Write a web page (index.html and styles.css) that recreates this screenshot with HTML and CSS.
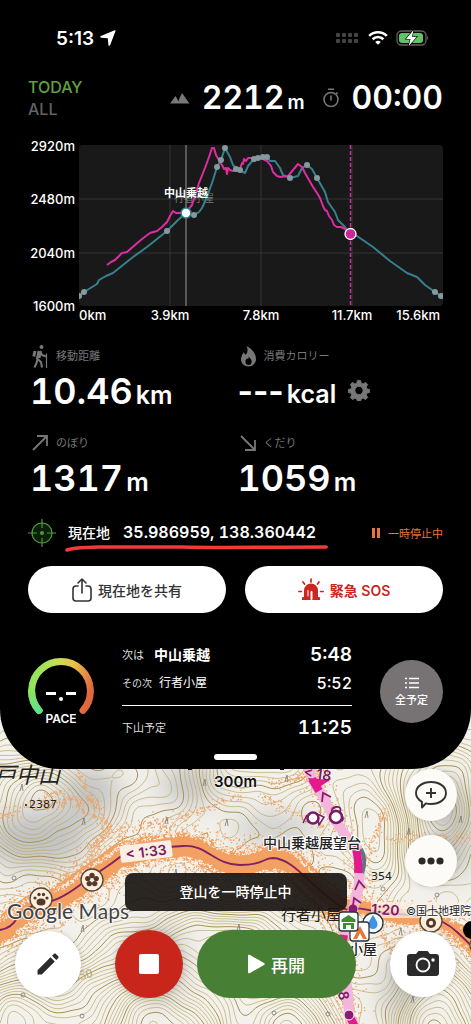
FILE: index.html
```html
<!DOCTYPE html>
<html lang="ja">
<head>
  <meta charset="UTF-8">
  <meta name="viewport" content="width=device-width, initial-scale=1">
  <title>登山記録</title>
  <link rel="stylesheet" href="styles.css">
</head>
<body>
  <main class="panel">
    <div class="status-bar">
      <div class="status-time">
        <span>5:13</span>
        <svg width="16" height="16" viewBox="0 0 16 16"><path d="M15.500 1 10.200 15c-.4 1-1.700 1-1.800-.1L7.800 8.200 1.100 7.700C0 7.600 0 6.300.9 5.900L14.700.2c.6-.2 1 .2.8.8z" fill="#fff"/></svg>
      </div>
      <div class="status-icons">
        <svg width="24" height="12" viewBox="0 0 24 12" fill="#434343">
          <rect x="0" y="1" width="4" height="4" rx="1"/><rect x="6" y="1" width="4" height="4" rx="1"/><rect x="12" y="1" width="4" height="4" rx="1"/><rect x="18" y="1" width="4" height="4" rx="1"/>
          <rect x="0" y="7" width="4" height="4" rx="1"/><rect x="6" y="7" width="4" height="4" rx="1"/><rect x="12" y="7" width="4" height="4" rx="1"/><rect x="18" y="7" width="4" height="4" rx="1"/>
        </svg>
        <svg width="20" height="16" viewBox="0 0 20 16" fill="none" stroke="#fff" stroke-width="2.600">
          <path d="M1.200 5.800a12.500 12.500 0 0 1 17.600 0"/><path d="M4.600 9.200a7.700 7.700 0 0 1 10.800 0"/>
          <path d="M10 14.800 7.200 12a4 4 0 0 1 5.600 0z" fill="#fff" stroke="none"/>
        </svg>
        <svg width="33" height="18" viewBox="0 0 33 18">
          <rect x="1" y="2" width="29" height="14" rx="4.500" fill="none" stroke="#69605f" stroke-width="1.300"/>
          <rect x="3" y="4" width="24" height="10" rx="3" fill="#5fc466"/>
          <path d="M31.200 7v4c1.400-.5 1.400-3.500 0-4z" fill="#69605f"/>
          <path d="M17.500 1 10 10h4.500L12.700 17l8-9.300h-4.700z" fill="#fff" stroke="#000" stroke-width="1.200" paint-order="stroke"/>
        </svg>
      </div>
    </div>

    <header class="summary">
      <div class="range">
        <a href="#today" class="range-link active">TODAY</a>
        <a href="#all" class="range-link">ALL</a>
      </div>
      <div class="summary-values">
        <svg width="20" height="12" viewBox="0 0 20 12" fill="#777"><path d="M0 11.500 5.500 4l3 4.200L12 1l7.500 10.500z"/><path d="m9 9-2-3" stroke="#000" stroke-width=".8"/></svg>
        <p class="big">2212<small>m</small></p>
        <svg class="timer" width="18" height="20" viewBox="0 0 18 20" fill="none" stroke="#777" stroke-width="1.600"><circle cx="9" cy="11.500" r="7"/><path d="M6 1.300h6M9 7.500v5M14 6l1.500-1.500"/></svg>
        <p class="big">00:00</p>
      </div>
    </header>

    <svg class="chart" viewBox="0 0 415 186" role="img" aria-label="標高グラフ">
      <g class="axis" text-anchor="end">
        <text x="47" y="12">2920m</text>
        <text x="47" y="65">2480m</text>
        <text x="47" y="119">2040m</text>
        <text x="47" y="172">1600m</text>
      </g>
      <g class="axis" text-anchor="middle">
        <text x="51" y="181" text-anchor="start">0km</text>
        <text x="142" y="181">3.9km</text>
        <text x="233" y="181">7.8km</text>
        <text x="324" y="181">11.7km</text>
        <text x="412" y="181" text-anchor="end">15.6km</text>
      </g>
      <clipPath id="plot"><rect width="364" height="161" rx="4"/></clipPath>
      <g transform="translate(51 6)">
        <g clip-path="url(#plot)">
          <rect width="364" height="161" fill="#191919"/>
          <path d="M0 54H364M0 108H364M91 0V161M182 0V161M273 0V161" stroke="#353535"/>
          <text class="ghost-label" x="115" y="57" text-anchor="middle">行者小屋</text>
          <path class="line plan" d="M0 151 5 147 18 139 20 135 27 131 34 128 44 120 54 112 68 102 78 94 88 86 99 75 107 68 115 70 120 67 123 63 128 52 134 35 138 22 142 15 146 3 151 12 154 20 158 24 162 26 166 28 169 21 175 14 188 12 191 16 196 16 201 23 204 30 211 33 219 31 223 23 228 20 233 24 238 33 246 47 249 57 256 67 259 75 266 82 271 89 278 91 294 102 311 116 328 128 338 132 346 140 356 147 362 151"/>
          <path class="line track" d="M28 120 32 117 36 115 43 108 48 107 56 100 63 94 71 88 78 86 83 82 88 77 91 71 94 66 97 68 103 68 107 67 113 60 120 38 126 23 130 12 133 3 135 3 137 10 141 17 143 20 145 24 147 23 148 29 149 23 151 25 154 26 158 25 161 24 163 18 164 19 165 14 167 16 169 13 178 13 184 14 188 16 192 21 194 27 198 31 201 32 209 31 214 25 219 19 223 22 226 28 230 35 234 42 238 48 241 53 244 61 246 65 248 66 250 71 253 75 255 80 258 82 262 82 266 84 271 89"/>
          <g class="spots">
            <circle cx="0" cy="151" r="3"/><circle cx="5" cy="147" r="3"/><circle cx="88" cy="86" r="3"/><circle cx="115" cy="70" r="3"/><circle cx="138" cy="22" r="3"/><circle cx="142" cy="15" r="3"/><circle cx="146" cy="3" r="3"/><circle cx="157" cy="24" r="3"/><circle cx="161" cy="25" r="3"/><circle cx="175" cy="14" r="3"/><circle cx="179" cy="13" r="3"/><circle cx="184" cy="12" r="3"/><circle cx="188" cy="12" r="3"/><circle cx="211" cy="33" r="3"/><circle cx="228" cy="20" r="3"/><circle cx="238" cy="33" r="3"/><circle cx="356" cy="147" r="3"/><circle cx="362" cy="151" r="3"/>
          </g>
          <path d="M107 0V161" stroke="#999"/>
          <path d="M271.500 0V161" stroke="#c5319a" stroke-width="1.500" stroke-dasharray="4 2"/>
        </g>
        <circle cx="107" cy="68" r="5" fill="#fff" stroke="#2c7f92" stroke-width="1.500"/>
        <circle cx="271.500" cy="89" r="5.500" fill="#cf2597" stroke="#fff" stroke-width="1.300"/>
        <text class="spot-label" x="107" y="52" text-anchor="middle">中山乗越</text>
      </g>
    </svg>

    <section class="stats">
      <div class="stat">
        <h2><svg width="24" height="24" viewBox="0 0 24 24" fill="none" stroke="#777" stroke-width="2" stroke-linejoin="round"><circle cx="13.500" cy="3" r="2" fill="#777" stroke="none"/><path d="M7 7 5.800 12.500" stroke-width="3"/><path d="m10.500 7.500-1.500 7 4 3.500 1 5.500M9.500 15l-1 4-2 4.500M12 7l2 4 4 1.500" /><path d="m11.800 7-1.300 7" stroke-width="4"/><path d="M18.500 9.500V24" stroke-width="1.200"/></svg>移動距離</h2>
        <p class="value">10.46<small>km</small></p>
      </div>
      <div class="stat">
        <h2><svg width="24" height="24" viewBox="0 0 24 24"><path d="M10.500 2c4.500 2 9.500 7 9.500 13 0 4.500-3.500 7.500-7.500 7.500S5 19.500 5 15.500C5 12 7 9.500 8 8c.3 1.500.8 2.300 1.700 2.800C12 9 12 5 10.500 2z" fill="#777"/><path d="M12.700 12.500c1.200 1.800 3 3 3 5.200 0 2-1.400 3.300-3.200 3.300s-3.100-1.300-3.100-3.100c0-1.700 1-2.700 1.700-3.600l.9 1c.6-.8.8-1.800.7-2.800z" fill="#000"/></svg>消費カロリー</h2>
        <p class="value"><span class="dashes">---</span><small>kcal</small>
          <button class="icon-button" aria-label="設定"><svg width="22" height="22" viewBox="0 0 24 24"><path fill="#777" fill-rule="evenodd" stroke="#777" stroke-linejoin="round" d="M10.300 1.500h3.400l.7 3 2.100.9 2.600-1.700 2.400 2.400-1.700 2.600.9 2.100 3 .7v3.200l-3 .7-.9 2.100 1.700 2.600-2.400 2.400-2.600-1.700-2.100.9-.7 2.800h-3.400l-.7-2.800-2.100-.9-2.600 1.700-2.400-2.400 1.700-2.600-.9-2.100-3-.7v-3.200l3-.7.9-2.100-1.700-2.600 2.400-2.400 2.600 1.700 2.100-.9zM12 8a4.500 4.500 0 1 0 0 9 4.500 4.500 0 0 0 0-9z"/></svg></button>
        </p>
      </div>
      <div class="stat">
        <h2><svg width="24" height="24" viewBox="0 0 24 24" fill="none" stroke="#777" stroke-width="1.800"><path d="M5 19 19 5M9 5h10v10"/></svg>のぼり</h2>
        <p class="value">1317<small>m</small></p>
      </div>
      <div class="stat">
        <h2><svg width="24" height="24" viewBox="0 0 24 24" fill="none" stroke="#777" stroke-width="1.800"><path d="m5 5 14 14M19 9v10H9"/></svg>くだり</h2>
        <p class="value">1059<small>m</small></p>
      </div>
    </section>

    <section class="location">
      <svg width="28" height="28" viewBox="0 0 28 28" fill="none" stroke="#4d9a3a" stroke-width="1.200"><circle cx="14" cy="14" r="10" fill="#0b1f08"/><path d="M14 0v9M14 19v9M0 14h9M19 14h9"/><circle cx="14" cy="14" r="2" fill="#4d9a3a" stroke="none"/></svg>
      <p class="coords">現在地<span>35.986959, 138.360442</span>
        <svg class="underline" viewBox="0 0 268 8" preserveAspectRatio="none"><path d="M2 6C12 3 20 4 34 3L120 3 C150 4 200 3 266 3" fill="none" stroke="#f23a3a" stroke-width="3.500" stroke-linecap="round"/></svg>
      </p>
      <p class="paused"><svg width="8" height="10" viewBox="0 0 8 10" fill="#e8763a"><path d="M0 0h3v10H0zM5 0h3v10H5z"/></svg>一時停止中</p>
    </section>

    <div class="actions">
      <button class="pill">
        <svg width="20" height="24" viewBox="0 0 20 24" fill="none" stroke="#333" stroke-width="1.600" stroke-linecap="round" stroke-linejoin="round"><path d="M6 8H4a3 3 0 0 0-3 3v9a3 3 0 0 0 3 3h12a3 3 0 0 0 3-3v-9a3 3 0 0 0-3-3h-2M10 15V1M6 5l4-4 4 4"/></svg>
        現在地を共有
      </button>
      <button class="pill sos">
        <svg width="26" height="24" viewBox="0 0 26 24" fill="none" stroke="#cb2720" stroke-width="1.700" stroke-linecap="round"><path d="M6 19v-6.500a7 7 0 0 1 14 0V19h1a1 1 0 0 1 1 1v2H4v-2a1 1 0 0 1 1-1z" fill="#cb2720" stroke="none"/><path d="M13.500 21v-7" stroke="#fff" stroke-width="2"/><path d="M10 12.500V18" stroke="#fff" stroke-width="1"/><path d="M13 1v3M5 4l1.500 2M21 4l-1.500 2M.9 13.500h2.500M22.600 13.500h2.500"/></svg>
        緊急 SOS
      </button>
    </div>

    <section class="plan-row">
      <svg width="66" height="68" viewBox="0 0 66 68" role="img" aria-label="ペース">
        <linearGradient id="pace" x1="0" y1=".3" x2="1" y2=".6"><stop offset="0" stop-color="#8ee35e"/><stop offset=".3" stop-color="#c4e055"/><stop offset=".6" stop-color="#e8c04c"/><stop offset="1" stop-color="#e0683f"/></linearGradient>
        <linearGradient id="pace-start" x1="0" y1="0" x2="0" y2="1"><stop offset="0" stop-color="#8ee35e"/><stop offset="1" stop-color="#5fe08c"/></linearGradient>
        <path d="M11 52.500A29.400 29.400 0 1 1 55 52.500" fill="none" stroke="url(#pace)" stroke-width="7" stroke-linecap="round"/>
        <path d="M3.600 33A29.400 29.400 0 0 0 11 52.500" fill="none" stroke="url(#pace-start)" stroke-width="7" stroke-linecap="round"/>
        <path d="M18 35.500h10M38 35.500h10" stroke="#fff" stroke-width="3"/><circle cx="33" cy="41" r="2" fill="#fff"/>
        <text class="pace-label" x="33" y="65" text-anchor="middle">PACE</text>
      </svg>
      <dl class="schedule">
        <div class="next"><dt>次は</dt><dd class="place">中山乗越</dd><dd class="time">5:48</dd></div>
        <div class="after"><dt>その次</dt><dd class="place">行者小屋</dd><dd class="time">5:52</dd></div>
        <div class="finish"><dt>下山予定</dt><dd class="time">11:25</dd></div>
      </dl>
      <button class="all-plans">
        <svg width="14" height="12" viewBox="0 0 14 12" fill="none" stroke="#fff" stroke-width="1.300"><path d="M4 1.500h10M4 6h10M4 10.500h10M0 1.500h2M0 6h2M0 10.500h2"/></svg>
        全予定
      </button>
    </section>
    <button class="handle" aria-label="パネルを開閉"></button>
  </main>

  <section class="map">
    <svg class="map-canvas" viewBox="0 0 471 325" preserveAspectRatio="xMidYMin slice" role="img" aria-label="地図">
      <defs>
        <filter id="soft" x="-50%" y="-50%" width="200%" height="200%"><feGaussianBlur stdDeviation="14"/></filter>
      </defs>
      <rect width="471" height="325" fill="#f3f1eb"/>
      <g fill="#9fa3a8" filter="url(#soft)" opacity=".6">
        <ellipse cx="35" cy="140" rx="55" ry="30"/>
        <ellipse cx="90" cy="95" rx="30" ry="28"/>
        <ellipse cx="160" cy="265" rx="22" ry="40"/>
        <ellipse cx="275" cy="130" rx="45" ry="12"/>
        <ellipse cx="455" cy="130" rx="20" ry="50"/>
        <ellipse cx="400" cy="290" rx="16" ry="35"/>
        <ellipse cx="190" cy="85" rx="30" ry="20"/>
      </g>
      <path id="contours" class="contours"/>
      <path id="contoursBold" class="contours bold"/>
      <path class="ridge" id="routeWest" d="M-8 236 0 231 7 229 17 219 40 205 60 201 80 186 100 173 120 158 145 151 172 148 183 147 200 151 217 161 233 166 247 165 263 160 273 159 290 164 310 184 330 201 343 209 353 210"/>
      <path class="ridge thin" id="routeEast" d="M353 210 363 208 377 213 400 218 430 218 443 225 457 233 471 246 480 256"/>
      <path id="stipple" fill="#f0a264"/>
      <path id="stippleLight" fill="#fbf5ec"/>
      <path class="route" d="M-8 236 0 231Q12 229 17 219T40 205C52 202 60 201 80 186S105 170 120 158S160 149 183 147S215 166 240 166S262 159 273 159C295 160 310 188 343 209Q348 212 353 210T377 213L430 218Q445 222 457 233T480 256"/>
      <path class="trail" d="M306 55 312 80 322 96 335 121 346 137 357 150 360 172 358 191 353 210 343 238 342 262 347 288 349 316 356 330"/>
      <path d="M361 150Q367 161 362 174" stroke="#5d7584" stroke-width="4" fill="none"/>
      <path d="M312 80 319 92M355 147Q359 158 358 174M344 236 343 243M349 316 356 330" stroke="#e21a8c" stroke-width="8" fill="none"/>
      <path d="m308 79 22 2-9 6-9-1z" fill="#e21a8c"/>
      <g fill="none" stroke="#8b1a70" stroke-width="1.800"><path d="m322 103 1-9 8 4M355 191l4-9 6 7M353 207l1-8 7 5"/></g>
      <g class="walk-time">
        <text x="303" y="78" transform="rotate(8 303 78)">&lt; 18</text>
        <text x="330" y="108" transform="rotate(75 330 108)">06</text>
        <text x="344" y="298" transform="rotate(80 344 292)">8</text>
        <g transform="rotate(-7 146 152)">
          <rect x="120" y="144" width="52" height="17" rx="2" fill="#f9efe4"/>
          <text x="146" y="158" text-anchor="middle">&lt; 1:33</text>
        </g>
        <rect x="371" y="203" width="100" height="16" fill="#f9efe4" opacity=".75"/>
        <text x="371" y="215" transform="rotate(3 371 215)">1:20</text>
      </g>
      <g fill="#fff" stroke="#7b1a63" stroke-width="2.600">
        <path d="m317 115 7 3-5 8zM307 116l-4 8" stroke-width="1.500"/><circle cx="313" cy="119" r="5.500"/><circle cx="336" cy="118" r="6"/>
      </g>
      <circle cx="353" cy="210" r="4.500" fill="#8b1a70"/>
      <circle cx="349" cy="316" r="5" fill="#8b1a70" stroke="#fff"/>
      <g fill="#fbefd9" stroke="#55453a" stroke-width="1.300">
        <circle cx="92" cy="181" r="11"/><circle cx="41" cy="200" r="11"/><circle cx="431" cy="222" r="11"/><circle cx="480" cy="246" r="10"/>
      </g>
      <g fill="#55382b">
        <circle cx="92" cy="176.500" r="2.700"/><circle cx="96.200" cy="179.600" r="2.700"/><circle cx="94.700" cy="184.600" r="2.700"/><circle cx="89.300" cy="184.600" r="2.700"/><circle cx="87.800" cy="179.600" r="2.700"/>
        <ellipse cx="41" cy="203" rx="4.500" ry="3.500"/><circle cx="35" cy="199" r="1.600"/><circle cx="39" cy="195.500" r="1.700"/><circle cx="43.500" cy="195.500" r="1.700"/><circle cx="47" cy="199" r="1.600"/>
        <circle cx="431" cy="224" r="5"/>
      </g>
      <circle cx="92" cy="181" r="1.600" fill="#fbefd9"/>
      <circle cx="431" cy="224" r="2.200" fill="#fbefd9"/>
      <circle cx="472" cy="231" r="9" fill="#000"/>
      <g class="marks" fill="none" stroke="#777" stroke-width=".8">
        <path d="m20 92 2-7 1 7M82 126l2-7 1 7M165 125l2-7 1 7M225 127l2-7 1 7M174 177l2-7 1 7M81 233l2-7 1 7M203 87l2-7 1 7M365 119l2-7 1 7M407 136l2-7 1 7M459 124l2-7 1 7M399 236l2-7 1 7M411 304l2-7 1 7M285 83l2-7 1 7M237 232l2-7 1 7"/>
        <circle cx="14" cy="179" r="2"/><circle cx="23" cy="296" r="2"/><circle cx="82" cy="317" r="2"/><circle cx="274" cy="314" r="2"/><circle cx="383" cy="190" r="2"/><circle cx="437" cy="196" r="2"/><circle cx="328" cy="315" r="2"/>
      </g>
      <g class="place-name">
        <text class="slanted" x="-6" y="84">戸中山</text>
        <text class="height" x="29" y="109">2387</text><circle cx="26" cy="106" r="1"/>
        <text class="height" x="371" y="181">354</text>
        <text class="elevation" x="74" y="282" transform="rotate(-12 74 282)">350</text>
        <text class="village" x="281" y="221">行者小屋</text>
        <text class="halo" x="263" y="149">中山乗越展望台</text>
        <text class="halo" x="349" y="255">小屋</text>
        <path d="M188 70h4M280 70h4" stroke="#111" stroke-width="2"/>
      </g>
      <g stroke="#29313a" stroke-width="1.300">
        <circle cx="373" cy="224" r="10" fill="#f4f9ff"/>
        <path d="M373 216c2.500 4 4.500 6.500 4.500 9.500a4.500 4.500 0 0 1-9 0c0-3 2-5.500 4.500-9.500z" fill="#3e93e6" stroke="none"/>
        <rect x="350" y="223" width="19" height="19" rx="3" fill="#fff"/>
        <path d="m360 227-7 13h4l3-6 3 6h4z" fill="#e87532" stroke="none"/>
        <rect x="339" y="213" width="19" height="19" rx="3" fill="#fff"/>
        <path d="m348.500 216-7 4.500v2.500h14v-2.500zM343 224h11v6h-3v-4h-5v4h-3z" fill="#3f8b36" stroke="none"/>
      </g>
    </svg>

    <div class="map-top">
      <span class="scale">300m</span>
      <div class="tools">
        <button class="round" aria-label="コメントを追加"><svg width="32" height="30" viewBox="0 0 32 30" fill="none" stroke="#333" stroke-width="1.900" stroke-linejoin="round"><path d="M16 2c8.500 0 15 4.700 15 11s-6.500 11-15 11c-1.800 0-3.600-.2-5.200-.6L7 27.500v-5.700C3.300 19.800 1 16.700 1 13 1 6.700 7.500 2 16 2z"/><path d="M16 8v10M11 13h10"/></svg></button>
        <button class="round" aria-label="メニュー"><svg width="26" height="8" viewBox="0 0 26 8" fill="#2b2b2b"><circle cx="4" cy="4" r="3.600"/><circle cx="13" cy="4" r="3.600"/><circle cx="22" cy="4" r="3.600"/></svg></button>
      </div>
    </div>
    <div class="credits">
      <span class="google"><b>Google</b> Maps</span>
      <span class="gsi">©国土地理院</span>
    </div>
    <div class="controls">
      <button class="circle" aria-label="編集"><svg width="24" height="24" viewBox="0 0 24 24" fill="#2b2b2b"><path d="M1.500 18.200 14.500 5.200l4.300 4.300L5.800 22.500H1.500zM16 3.700l1.800-1.800c.6-.6 1.500-.6 2.100 0l2.200 2.200c.6.6.6 1.500 0 2.100L20.300 8z"/></svg></button>
      <button class="circle stop" aria-label="終了"><svg width="20" height="20" viewBox="0 0 20 20"><rect width="20" height="20" rx="2" fill="#fff"/></svg></button>
      <button class="resume"><svg width="17" height="20" viewBox="0 0 17 20" fill="#fff"><path d="M0 2C0 .8 1 .5 2 1l14 8c1 .6 1 1.400 0 2L2 19c-1 .5-2 .2-2-1z"/></svg>再開</button>
      <button class="circle" aria-label="カメラ"><svg width="34" height="28" viewBox="0 0 34 28"><path d="M4 4h6l2-2.500c.4-.4.8-.5 1.200-.5h7.600c.4 0 .8.100 1.200.5L24 4h6a3 3 0 0 1 3 3v16a3 3 0 0 1-3 3H4a3 3 0 0 1-3-3V7a3 3 0 0 1 3-3z" fill="#2b2b2b"/><circle cx="17" cy="15" r="6.500" fill="none" stroke="#fff" stroke-width="1.800"/><circle cx="27" cy="10" r="1.700" fill="#fff"/></svg></button>
    </div>
    <div class="toast" role="status">登山を一時停止中</div>
  </section>

  <script src="map.js"></script>
</body>
</html>
```

FILE: styles.css
```css
* {
  box-sizing: border-box;
}

body {
  margin: 0;
  min-height: 100vh;
  display: flex;
  flex-direction: column;
  background-color: #f3f1eb;
  color: #fff;
  font-family: Inter, "Noto Sans CJK JP", sans-serif;
}

h2, p, dl, dd {
  margin: 0;
}

button {
  border: none;
  padding: 0;
  font-family: inherit;
  cursor: pointer;
}

svg {
  flex: none;
}

.panel {
  position: relative;
  z-index: 1;
  display: flex;
  flex-direction: column;
  padding: 0 28px 9px;
  background-color: #000;
  border-radius: 0 0 60px 60px;
}

/* status bar */
.status-bar {
  height: 76px;
  padding: 0 14px 0 28px;
  display: flex;
  align-items: center;
  justify-content: space-between;
}

.status-time {
  display: flex;
  align-items: center;
  gap: 6px;
  font-size: 19px;
  font-weight: 600;
}

.status-icons {
  display: flex;
  align-items: center;
  gap: 8px;
}

/* header */
.summary {
  display: flex;
  align-items: center;
  justify-content: space-between;
}

.range {
  display: flex;
  flex-direction: column;
}

.range-link {
  color: #636363;
  font-size: 16px;
  font-weight: 500;
  line-height: 22px;
  text-decoration: none;
}

.range-link.active {
  color: #60a045;
}

.summary-values {
  display: flex;
  align-items: center;
  gap: 12px;
}

.timer {
  margin-left: 5px;
}

.big {
  font-size: 32px;
  font-weight: 600;
  line-height: 44px;
  font-variant-numeric: tabular-nums;
}

.big small {
  margin-left: 3px;
  font-size: 19px;
  line-height: 1;
}

/* chart */
.chart {
  display: block;
  width: 100%;
  margin-top: 19px;
}

.axis {
  fill: #fff;
  font-size: 13px;
  font-weight: 500;
}

.line {
  fill: none;
  stroke-width: 2;
  stroke-linejoin: round;
}

.plan {
  stroke: #37808d;
}

.track {
  stroke: #dc2da2;
}

.spots {
  fill: #849a9c;
}

.spot-label {
  fill: #fff;
  font-size: 11px;
  font-weight: 600;
}

.ghost-label {
  fill: #777;
  font-size: 10px;
}

/* stats */
.stats {
  display: grid;
  grid-template-columns: 1fr 1fr;
  row-gap: 19px;
  margin-top: 19px;
}

.stat h2 {
  display: flex;
  align-items: center;
  gap: 4px;
  color: #777;
  font-size: 11px;
  font-weight: 400;
  line-height: 24px;
}

.value {
  display: flex;
  align-items: baseline;
  height: 44px;
  padding-left: 2px;
  font-size: 36px;
  font-weight: 600;
  line-height: 46px;
  font-variant-numeric: tabular-nums;
}

.value small {
  margin-left: 3px;
  font-size: 25px;
  line-height: 1;
}

.dashes {
  font-weight: 700;
  font-size: 33px;
  font-variant-numeric: normal;
}

.icon-button {
  align-self: center;
  margin-left: 12px;
  background: none;
  line-height: 0;
}

/* current location */
.location {
  display: flex;
  align-items: center;
  margin-top: 20px;
}

.coords {
  position: relative;
  margin-left: 12px;
  font-size: 14px;
  font-weight: 500;
  line-height: 28px;
}

.coords span {
  margin-left: 13px;
  font-size: 16px;
  font-weight: 600;
  line-height: 1;
  font-variant-numeric: tabular-nums;
}

.underline {
  position: absolute;
  left: -3px;
  bottom: -5px;
  width: calc(100% + 15px);
  height: 8px;
}

.paused {
  display: flex;
  align-items: center;
  gap: 8px;
  margin-left: auto;
  color: #e8763a;
  font-size: 11px;
}

/* share and sos */
.actions {
  display: grid;
  grid-template-columns: 1fr 1fr;
  gap: 19px;
  margin-top: 19px;
}

.pill {
  display: flex;
  align-items: center;
  justify-content: center;
  gap: 6px;
  height: 47px;
  border-radius: 24px;
  background-color: #fff;
  color: #333;
  font-size: 14px;
  font-weight: 500;
}

.pill.sos {
  color: #cb2720;
  font-weight: 600;
}

/* pace and schedule */
.plan-row {
  display: flex;
  align-items: center;
  gap: 28px;
  margin-top: 28px;
}

.pace-label {
  fill: #fff;
  font-size: 12px;
  font-weight: 600;
}

.schedule {
  flex: 1;
}

.schedule div {
  display: flex;
  align-items: center;
  line-height: 28px;
  font-size: 12px;
}

.schedule dt {
  font-size: 11px;
  color: #ddd;
}

.schedule .after dt {
  font-size: 10px;
}

.place {
  margin-left: 7px;
}

.next .place {
  margin-left: 10px;
  font-size: 14px;
  font-weight: 700;
}

.time {
  margin-left: auto;
  font-size: 19px;
  font-weight: 600;
  font-variant-numeric: tabular-nums;
}

.after .time {
  font-size: 16px;
  font-weight: 500;
}

.schedule .finish {
  margin-top: 8px;
  padding-top: 8px;
  border-top: 1px solid #fff;
}

.all-plans {
  display: flex;
  flex-direction: column;
  align-items: center;
  justify-content: center;
  gap: 4px;
  width: 63px;
  height: 63px;
  border-radius: 50%;
  background-color: #777273;
  color: #fff;
  font-size: 11px;
  font-weight: 500;
  line-height: 14px;
}

.handle {
  align-self: center;
  width: 43px;
  height: 6px;
  margin-top: 12px;
  border-radius: 3px;
  background-color: #fff;
}

/* map */
.map {
  position: relative;
  flex: 1;
  display: flex;
  flex-direction: column;
  justify-content: space-between;
  margin-top: -70px;
  padding: 70px 0 26px;
  overflow: hidden;
}

.map-canvas {
  position: absolute;
  inset: 0;
  width: 100%;
  height: 100%;
}

.map-top,
.credits,
.controls {
  position: relative;
}

.contours {
  fill: none;
  stroke: #bba96a;
  stroke-width: 0.7;
}

.contours.bold {
  stroke: #a89250;
  stroke-width: 1;
}

.ridge {
  fill: none;
  stroke: #f3a062;
  stroke-width: 27;
  stroke-linejoin: round;
}

.ridge.thin {
  stroke-width: 16;
}

.route {
  fill: none;
  stroke: #82205f;
  stroke-width: 1.8;
}

.trail {
  fill: none;
  stroke: #f3b5dc;
  stroke-width: 10;
  stroke-linejoin: round;
}

.walk-time {
  fill: #7b1765;
  font-size: 14px;
  font-weight: 600;
}

.place-name {
  fill: #222;
  font-size: 14px;
}

.slanted {
  font-size: 22px;
  font-style: italic;
}

.height {
  font-family: "DejaVu Sans", sans-serif;
  font-size: 11px;
}

.elevation {
  fill: #b9a566;
  font-family: "Liberation Serif", serif;
  font-size: 13px;
}

.village {
  font-size: 15px;
}

.halo {
  font-weight: 500;
  paint-order: stroke;
  stroke: #fff;
  stroke-width: 2px;
}

.map-top {
  display: grid;
  grid-template-columns: 1fr auto 1fr;
}

.scale {
  grid-column: 2;
  color: #111;
  font-size: 15px;
  font-weight: 600;
  line-height: 26px;
  text-shadow: 0 0 2px #fff, 0 0 2px #fff;
}

.tools {
  justify-self: end;
  display: flex;
  flex-direction: column;
  gap: 14px;
  margin-right: 14px;
}

.round,
.circle {
  display: flex;
  align-items: center;
  justify-content: center;
  width: 52px;
  height: 52px;
  border-radius: 50%;
  background-color: #fcfbf8;
  box-shadow: 0 0 6px rgba(0, 0, 0, 0.15);
}

.toast {
  position: absolute;
  left: 50%;
  bottom: 113px;
  padding: 0 55px;
  transform: translateX(-50%);
  border-radius: 8px;
  background-color: rgba(25, 21, 18, 0.92);
  font-size: 14px;
  font-weight: 500;
  line-height: 38px;
  white-space: nowrap;
}

.credits {
  display: flex;
  align-items: center;
  justify-content: space-between;
  height: 28px;
  margin: auto 0 6px;
  padding-left: 7px;
  color: #444;
  text-shadow: 1px 0 1px #fff, -1px 0 1px #fff, 0 1px 1px #fff, 0 -1px 1px #fff;
}

.google {
  font-family: Lato, sans-serif;
  font-size: 21px;
}

.google b {
  font-weight: 500;
}

.gsi {
  color: #222;
  font-size: 11px;
}

.controls {
  display: flex;
  align-items: center;
  padding: 0 15px;
}

.circle {
  width: 66px;
  height: 66px;
  background-color: #fff;
}

.circle.stop {
  width: 68px;
  height: 68px;
  margin-left: 34px;
  background-color: #c8261b;
}

.resume {
  flex: 1;
  display: flex;
  align-items: center;
  justify-content: center;
  gap: 6px;
  height: 68px;
  margin: 0 34px 0 14px;
  border-radius: 34px;
  background-color: #477f35;
  color: #fff;
  font-size: 17px;
  font-weight: 500;
}
```

FILE: map.js
```js
// seeded so the terrain is the same on every load
let seed = 7;
function rand() {
  seed = (seed * 16807) % 2147483647;
  return seed / 2147483647;
}

// x, y, width, height, altitude
const peaks = [
  [40, 108, 70, 56, 11],
  [160, 335, 85, 80, 20],
  [250, 60, 60, 34, -6],
  [440, 110, 38, 60, 9],
  [300, 335, 45, 60, 12],
  [440, 330, 50, 70, 14],
  [10, 330, 50, 60, 12],
  [240, 235, 70, 30, 6],
  [375, 130, 26, 40, -5],
  [160, 60, 50, 50, 5]
];

function altitude(x, y) {
  let h = 0;
  for (const [px, py, w, t, a] of peaks) {
    h += a * Math.exp(-(((x - px) / w) ** 2 + ((y - py) / t) ** 2) / 1.2);
  }
  return h + 0.4 * Math.sin(x / 11 + y / 23) + 0.3 * Math.sin(y / 9 - x / 19) + 0.12 * Math.sin(x / 5) * Math.cos(y / 7);
}

function contour(level) {
  const step = 3;
  let d = "";
  for (let x = 0; x < 471; x += step) {
    for (let y = 0; y < 325; y += step) {
      const c = [[x, y], [x + step, y], [x + step, y + step], [x, y + step]];
      const h = c.map(p => altitude(p[0], p[1]) - level);
      const hits = [];
      for (let i = 0; i < 4; i++) {
        const j = (i + 1) % 4;
        if (h[i] > 0 !== h[j] > 0) {
          const t = h[i] / (h[i] - h[j]);
          hits.push((c[i][0] + t * (c[j][0] - c[i][0])).toFixed(1) + " " + (c[i][1] + t * (c[j][1] - c[i][1])).toFixed(1));
        }
      }
      if (hits.length >= 2) d += "M" + hits[0] + "L" + hits[1];
    }
  }
  return d;
}

let thin = "";
let bold = "";
for (let i = -12; i < 42; i++) {
  if (i % 5 === 0) bold += contour(i * 0.55);
  else thin += contour(i * 0.55);
}
document.getElementById("contours").setAttribute("d", thin);
document.getElementById("contoursBold").setAttribute("d", bold);

function dot(x, y, s) {
  return `M${x.toFixed(1)} ${y.toFixed(1)}h${s}v${s}h-${s}z`;
}

// loose sand along the ridges
let sand = "";
let gaps = "";
function scatter(path, count, inner, spread) {
  const length = path.getTotalLength();
  for (let i = 0; i < count; i++) {
    const p = path.getPointAtLength(rand() * length);
    const angle = rand() * Math.PI * 2;
    const r = inner + rand() * rand() * spread;
    sand += dot(p.x + Math.cos(angle) * r, p.y + Math.sin(angle) * r, 1.3);
    if (i % 2) {
      const q = inner - 2 + rand() * 5;
      const side = rand() > 0.5 ? 1 : -1;
      gaps += dot(p.x + rand() * 3, p.y + side * q, 1.2);
    }
  }
}
scatter(document.getElementById("routeWest"), 3200, 12, 28);
scatter(document.getElementById("routeEast"), 700, 8, 22);
scatter(document.querySelector(".trail"), 700, 4, 22);

// dotted side trails
const sides = [[0, 118, 60, 92], [60, 92, 110, 130], [75, 70, 110, 130], [90, 150, 110, 130], [110, 130, 180, 118], [180, 118, 240, 95], [260, 95, 325, 130], [365, 160, 385, 110], [385, 140, 471, 138], [365, 210, 395, 255], [270, 85, 320, 75], [40, 105, 100, 100]];
for (const [x1, y1, x2, y2] of sides) {
  for (let i = 0; i < 90; i++) {
    const t = rand();
    sand += dot(x1 + (x2 - x1) * t + (rand() - 0.5) * 14 * rand(), y1 + (y2 - y1) * t + (rand() - 0.5) * 16 * rand(), 1.2);
  }
}
document.getElementById("stipple").setAttribute("d", sand);
document.getElementById("stippleLight").setAttribute("d", gaps);
```
